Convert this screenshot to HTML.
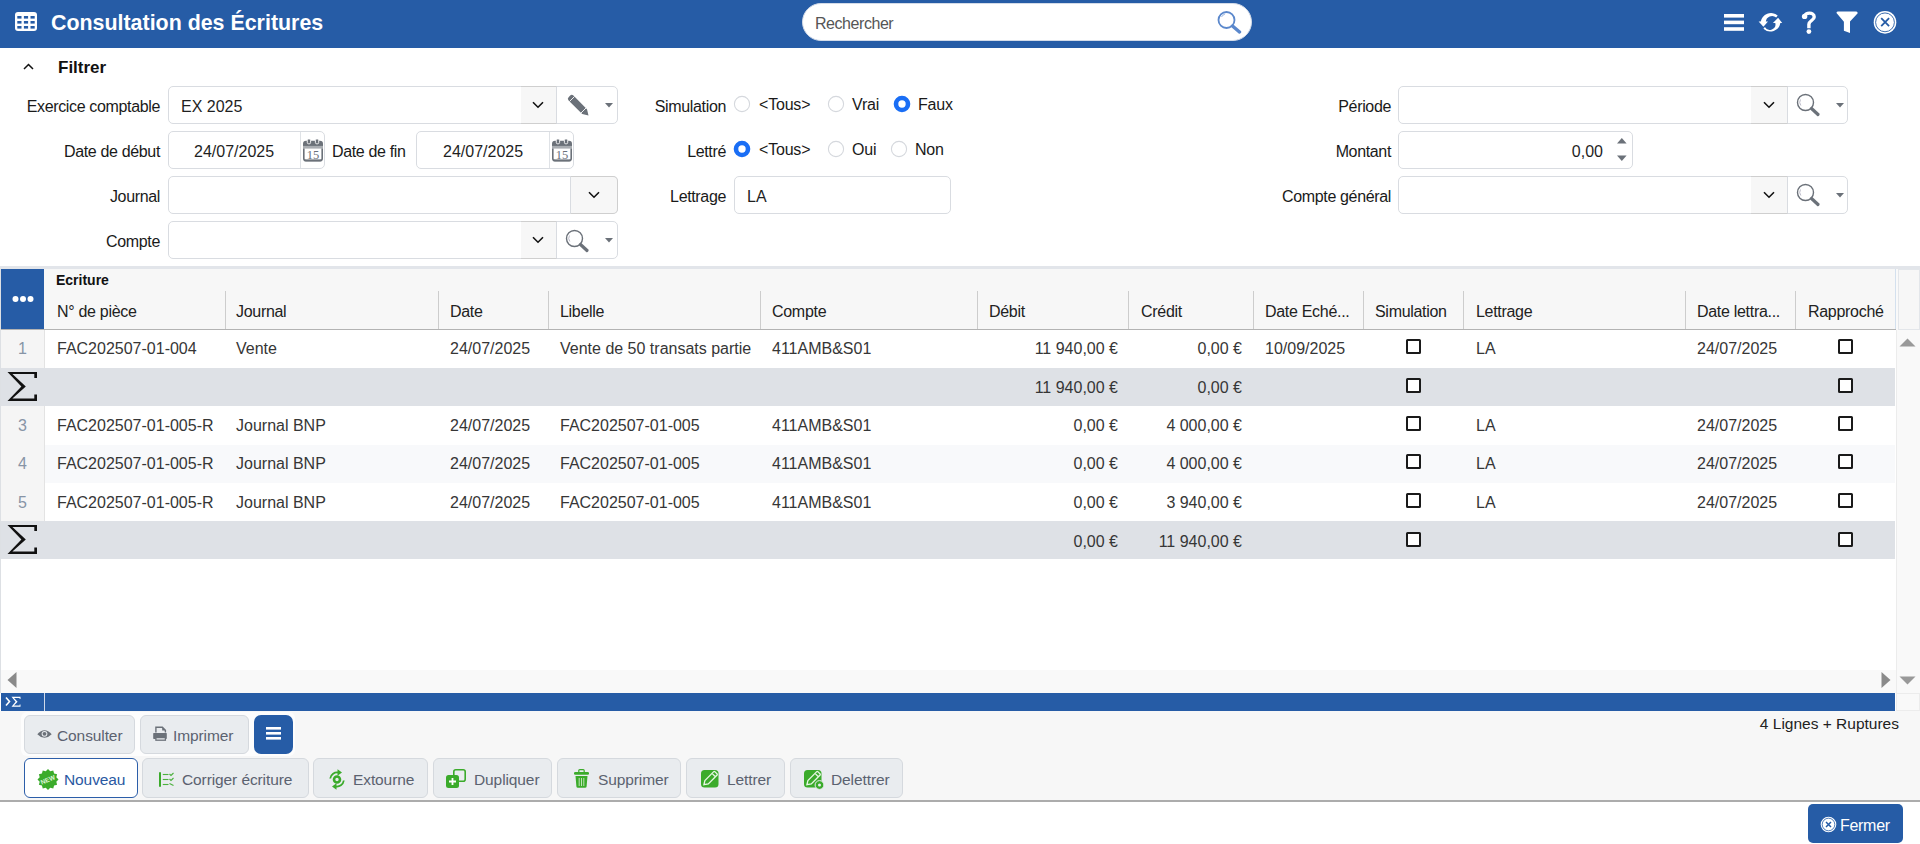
<!DOCTYPE html>
<html><head><meta charset="utf-8">
<style>
*{box-sizing:border-box;margin:0;padding:0}
html,body{width:1920px;height:844px;overflow:hidden;background:#fff;font-family:"Liberation Sans",sans-serif}
.r{position:absolute}
.t{position:absolute;line-height:20px;white-space:nowrap}
</style></head><body>
<div class="r" style="left:0px;top:0px;width:1920px;height:48px;background:#265ca6;"></div>
<svg class="r" style="left:15px;top:12px" width="22" height="19" viewBox="0 0 22 19"><rect x="0" y="0" width="22" height="19" rx="3" fill="#fff"/><g fill="#265ca6"><rect x="2.3" y="4" width="4.2" height="2.6"/><rect x="8.9" y="4" width="4.2" height="2.6"/><rect x="15.5" y="4" width="4.2" height="2.6"/><rect x="2.3" y="9" width="4.2" height="2.6"/><rect x="8.9" y="9" width="4.2" height="2.6"/><rect x="15.5" y="9" width="4.2" height="2.6"/><rect x="2.3" y="14" width="4.2" height="2.6"/><rect x="8.9" y="14" width="4.2" height="2.6"/><rect x="15.5" y="14" width="4.2" height="2.6"/></g></svg>
<div class="t" style="left:51px;top:10px;font-size:21.4px;color:#fff;font-weight:bold;line-height:26px;">Consultation des Écritures</div>
<div class="r" style="left:802px;top:3px;width:450px;height:38px;border-radius:19px;background:#fff;border:1px solid #d3dbe8"></div>
<div class="t" style="left:815px;top:14px;font-size:16px;color:#555;font-weight:normal;letter-spacing:-0.45px;">Rechercher</div>
<svg class="r" style="left:1216px;top:10px" width="27" height="24" viewBox="0 0 27 24"><circle cx="10.5" cy="10" r="8" fill="none" stroke="#5b88cc" stroke-width="1.8"/><path d="M5.5 7 A6 6 0 0 1 9 4" fill="none" stroke="#9db8e2" stroke-width="1"/><line x1="16.5" y1="16" x2="23.5" y2="22" stroke="#5b88cc" stroke-width="3.4" stroke-linecap="round"/></svg>
<svg class="r" style="left:1724px;top:14px" width="20" height="17" viewBox="0 0 20 17"><rect x="0" y="0" width="20" height="3.6" fill="#fff"/><rect x="0" y="6.6" width="20" height="3.6" fill="#fff"/><rect x="0" y="13.2" width="20" height="3.6" fill="#fff"/></svg>
<svg class="r" style="left:1757px;top:10px" width="26" height="24" viewBox="0 0 26 24"><path d="M20.7 5.4 A10.6 10.6 0 0 0 3.6 12 L8.8 12 A6.3 6.3 0 0 1 19.2 7.6 Z" fill="#fff"/><path d="M1.6 11.5 L11 11.5 L6.4 16.8Z" fill="#fff"/><path d="M6.4 18.8 A10.2 10.2 0 0 0 23.4 12.8 L18.2 12.8 A5.6 5.6 0 0 1 7.9 17 Z" fill="#fff"/><path d="M15.9 12.9 L25.2 12.9 L21.1 7.8Z" fill="#fff"/></svg>
<svg class="r" style="left:1801px;top:10px" width="16" height="25" viewBox="0 0 16 25"><path d="M3.6 6.4 C3.8 2.2, 13.2 1.8, 13.2 6.9 C13.2 10.2, 7.9 10.8, 7.9 14.2 V18.2" fill="none" stroke="#fff" stroke-width="3.4"/><circle cx="3.6" cy="6.4" r="2.7" fill="#fff"/><circle cx="7.9" cy="21.6" r="2.4" fill="#fff"/></svg>
<svg class="r" style="left:1836px;top:11px" width="22" height="23" viewBox="0 0 22 23"><path d="M0.5 2 Q0.3 0.5 1.8 0.5 H20.2 Q21.7 0.5 21.7 2.3 L14 10.4 V22 L7.9 19.7 V10.8 Z" fill="#fff"/></svg>
<svg class="r" style="left:1873px;top:10px" width="24" height="25" viewBox="0 0 24 25"><circle cx="12" cy="12.35" r="11.3" fill="#fff"/><circle cx="12" cy="12.35" r="9.4" fill="none" stroke="#265ca6" stroke-width="0.9"/><path d="M8.2 8.2 L16.1 16.1 M16.1 8.2 L8.2 16.1" stroke="#265ca6" stroke-width="1.8"/></svg>
<svg class="r" style="left:23px;top:63px" width="11" height="7" viewBox="0 0 11 7"><path d="M1 6 L5.5 1.5 L10 6" fill="none" stroke="#111" stroke-width="1.5"/></svg>
<div class="t" style="left:58px;top:58px;font-size:17px;color:#111;font-weight:bold;">Filtrer</div>
<div class="t" style="right:1760px;top:97px;font-size:16px;color:#1a1a1a;font-weight:normal;letter-spacing:-0.35px;">Exercice comptable</div>
<div class="t" style="right:1760px;top:142px;font-size:16px;color:#1a1a1a;font-weight:normal;letter-spacing:-0.35px;">Date de début</div>
<div class="t" style="right:1760px;top:187px;font-size:16px;color:#1a1a1a;font-weight:normal;letter-spacing:-0.35px;">Journal</div>
<div class="t" style="right:1760px;top:232px;font-size:16px;color:#1a1a1a;font-weight:normal;letter-spacing:-0.35px;">Compte</div>
<div class="r" style="left:168px;top:86px;width:450px;height:38px;border:1px solid #d9dce1;border-radius:5px;background:#fff"></div>
<div class="t" style="left:181px;top:97px;font-size:16px;color:#1f1f1f;font-weight:normal;">EX 2025</div>
<div class="r" style="left:521px;top:86px;width:36px;height:38px;background:#f7f7f7;border-top:1px solid #cfcfcf;border-bottom:1px solid #cfcfcf;border-right:1px solid #d9dce1;"></div>
<svg class="r" style="left:532px;top:101px" width="12" height="8" viewBox="0 0 12 8"><path d="M1 1.2 L6 6.2 L11 1.2" fill="none" stroke="#111" stroke-width="1.6"/></svg>
<svg class="r" style="left:567px;top:94px" width="22" height="22" viewBox="0 0 22 22"><path d="M3.2 1.6 Q4.8 0 6.4 1.6 L20 15.2 L21.5 21.5 L15.2 20 L1.6 6.4 Q0 4.8 1.6 3.2Z" fill="#6b7179"/><line x1="2.5" y1="7.5" x2="7.5" y2="2.5" stroke="#fff" stroke-width="0.9"/><line x1="14" y1="19" x2="19" y2="14" stroke="#fff" stroke-width="0.9"/></svg>
<svg class="r" style="left:605px;top:103px" width="8" height="5" viewBox="0 0 8 5"><path d="M0 0 H8 L4 4.5Z" fill="#6b7179"/></svg>
<div class="r" style="left:168px;top:131px;width:157px;height:38px;border:1px solid #d9dce1;border-radius:5px;background:#fff"></div>
<div class="t" style="left:194px;top:142px;font-size:16px;color:#1f1f1f;font-weight:normal;">24/07/2025</div>
<div class="r" style="left:300px;top:132px;width:1px;height:36px;background:#dfe2e6;"></div>
<svg class="r" style="left:303px;top:139px" width="20" height="23" viewBox="0 0 20 23"><path d="M0 5 Q0 1.8 3 1.8 H17 Q20 1.8 20 5 V6.9 H0Z" fill="#6b7179"/><rect x="4.3" y="0" width="3.3" height="4.8" rx="1.3" fill="#6b7179" stroke="#fff" stroke-width="0.9"/><rect x="12.4" y="0" width="3.3" height="4.8" rx="1.3" fill="#6b7179" stroke="#fff" stroke-width="0.9"/><rect x="0" y="6.9" width="20" height="2.7" fill="#a9adb2"/><path d="M0.8 9.4 V19.6 Q0.8 21.8 3 21.8 H17 Q19.2 21.8 19.2 19.6 V9.4" fill="none" stroke="#6b7179" stroke-width="1.6"/><rect x="1.5" y="20.4" width="17" height="1.9" fill="#6b7179"/><text x="10" y="20" font-size="12.5" font-family="Liberation Serif" fill="#6b7179" text-anchor="middle">15</text></svg>
<div class="t" style="left:332px;top:142px;font-size:16px;color:#1a1a1a;font-weight:normal;letter-spacing:-0.35px;">Date de fin</div>
<div class="r" style="left:416px;top:131px;width:158px;height:38px;border:1px solid #d9dce1;border-radius:5px;background:#fff"></div>
<div class="t" style="left:443px;top:142px;font-size:16px;color:#1f1f1f;font-weight:normal;">24/07/2025</div>
<div class="r" style="left:549px;top:132px;width:1px;height:36px;background:#dfe2e6;"></div>
<svg class="r" style="left:552px;top:139px" width="20" height="23" viewBox="0 0 20 23"><path d="M0 5 Q0 1.8 3 1.8 H17 Q20 1.8 20 5 V6.9 H0Z" fill="#6b7179"/><rect x="4.3" y="0" width="3.3" height="4.8" rx="1.3" fill="#6b7179" stroke="#fff" stroke-width="0.9"/><rect x="12.4" y="0" width="3.3" height="4.8" rx="1.3" fill="#6b7179" stroke="#fff" stroke-width="0.9"/><rect x="0" y="6.9" width="20" height="2.7" fill="#a9adb2"/><path d="M0.8 9.4 V19.6 Q0.8 21.8 3 21.8 H17 Q19.2 21.8 19.2 19.6 V9.4" fill="none" stroke="#6b7179" stroke-width="1.6"/><rect x="1.5" y="20.4" width="17" height="1.9" fill="#6b7179"/><text x="10" y="20" font-size="12.5" font-family="Liberation Serif" fill="#6b7179" text-anchor="middle">15</text></svg>
<div class="r" style="left:168px;top:176px;width:450px;height:38px;border:1px solid #d9dce1;border-radius:5px;background:#fff"></div>
<div class="r" style="left:570px;top:176px;width:48px;height:38px;background:#f7f7f7;border:1px solid #cfcfcf;border-left:1px solid #d9dce1;border-radius:0 5px 5px 0"></div>
<svg class="r" style="left:588px;top:191px" width="12" height="8" viewBox="0 0 12 8"><path d="M1 1.2 L6 6.2 L11 1.2" fill="none" stroke="#111" stroke-width="1.6"/></svg>
<div class="r" style="left:168px;top:221px;width:450px;height:38px;border:1px solid #d9dce1;border-radius:5px;background:#fff"></div>
<div class="r" style="left:521px;top:221px;width:36px;height:38px;background:#f7f7f7;border-top:1px solid #cfcfcf;border-bottom:1px solid #cfcfcf;border-right:1px solid #d9dce1;"></div>
<svg class="r" style="left:532px;top:236px" width="12" height="8" viewBox="0 0 12 8"><path d="M1 1.2 L6 6.2 L11 1.2" fill="none" stroke="#111" stroke-width="1.6"/></svg>
<svg class="r" style="left:565px;top:229px" width="25" height="24" viewBox="0 0 25 24"><circle cx="9.5" cy="9.5" r="8" fill="none" stroke="#6b7179" stroke-width="1.4"/><path d="M4.5 6.5 A5.5 5.5 0 0 0 4.8 12.5" fill="none" stroke="#aab" stroke-width="0.8"/><line x1="15.5" y1="15.5" x2="22" y2="21.5" stroke="#6b7179" stroke-width="3.2" stroke-linecap="round"/></svg>
<svg class="r" style="left:605px;top:238px" width="8" height="5" viewBox="0 0 8 5"><path d="M0 0 H8 L4 4.5Z" fill="#6b7179"/></svg>
<div class="t" style="right:1194px;top:97px;font-size:16px;color:#1a1a1a;font-weight:normal;letter-spacing:-0.35px;">Simulation</div>
<div class="t" style="right:1194px;top:142px;font-size:16px;color:#1a1a1a;font-weight:normal;letter-spacing:-0.35px;">Lettré</div>
<div class="t" style="right:1194px;top:187px;font-size:16px;color:#1a1a1a;font-weight:normal;letter-spacing:-0.35px;">Lettrage</div>
<svg class="r" style="left:733px;top:95px" width="18" height="18" viewBox="0 0 18 18"><circle cx="9" cy="9" r="7.6" fill="#fff" stroke="#d5d8dd" stroke-width="1.1"/></svg>
<div class="t" style="left:759px;top:95px;font-size:16px;color:#1a1a1a;font-weight:normal;letter-spacing:-0.2px;">&lt;Tous&gt;</div>
<svg class="r" style="left:827px;top:95px" width="18" height="18" viewBox="0 0 18 18"><circle cx="9" cy="9" r="7.6" fill="#fff" stroke="#d5d8dd" stroke-width="1.1"/></svg>
<div class="t" style="left:852px;top:95px;font-size:16px;color:#1a1a1a;font-weight:normal;letter-spacing:-0.2px;">Vrai</div>
<svg class="r" style="left:893px;top:95px" width="18" height="18" viewBox="0 0 18 18"><circle cx="9" cy="9" r="6" fill="#fff" stroke="#1a6ef5" stroke-width="4.6"/></svg>
<div class="t" style="left:918px;top:95px;font-size:16px;color:#1a1a1a;font-weight:normal;letter-spacing:-0.2px;">Faux</div>
<svg class="r" style="left:733px;top:140px" width="18" height="18" viewBox="0 0 18 18"><circle cx="9" cy="9" r="6" fill="#fff" stroke="#1a6ef5" stroke-width="4.6"/></svg>
<div class="t" style="left:759px;top:140px;font-size:16px;color:#1a1a1a;font-weight:normal;letter-spacing:-0.2px;">&lt;Tous&gt;</div>
<svg class="r" style="left:827px;top:140px" width="18" height="18" viewBox="0 0 18 18"><circle cx="9" cy="9" r="7.6" fill="#fff" stroke="#d5d8dd" stroke-width="1.1"/></svg>
<div class="t" style="left:852px;top:140px;font-size:16px;color:#1a1a1a;font-weight:normal;letter-spacing:-0.2px;">Oui</div>
<svg class="r" style="left:890px;top:140px" width="18" height="18" viewBox="0 0 18 18"><circle cx="9" cy="9" r="7.6" fill="#fff" stroke="#d5d8dd" stroke-width="1.1"/></svg>
<div class="t" style="left:915px;top:140px;font-size:16px;color:#1a1a1a;font-weight:normal;letter-spacing:-0.2px;">Non</div>
<div class="r" style="left:734px;top:176px;width:217px;height:38px;border:1px solid #d9dce1;border-radius:5px;background:#fff"></div>
<div class="t" style="left:747px;top:187px;font-size:16px;color:#1f1f1f;font-weight:normal;">LA</div>
<div class="t" style="right:529px;top:97px;font-size:16px;color:#1a1a1a;font-weight:normal;letter-spacing:-0.35px;">Période</div>
<div class="t" style="right:529px;top:142px;font-size:16px;color:#1a1a1a;font-weight:normal;letter-spacing:-0.35px;">Montant</div>
<div class="t" style="right:529px;top:187px;font-size:16px;color:#1a1a1a;font-weight:normal;letter-spacing:-0.35px;">Compte général</div>
<div class="r" style="left:1398px;top:86px;width:450px;height:38px;border:1px solid #d9dce1;border-radius:5px;background:#fff"></div>
<div class="r" style="left:1751px;top:86px;width:37px;height:38px;background:#f7f7f7;border-top:1px solid #cfcfcf;border-bottom:1px solid #cfcfcf;border-right:1px solid #d9dce1;"></div>
<svg class="r" style="left:1763px;top:101px" width="12" height="8" viewBox="0 0 12 8"><path d="M1 1.2 L6 6.2 L11 1.2" fill="none" stroke="#111" stroke-width="1.6"/></svg>
<svg class="r" style="left:1796px;top:93px" width="25" height="24" viewBox="0 0 25 24"><circle cx="9.5" cy="9.5" r="8" fill="none" stroke="#6b7179" stroke-width="1.4"/><path d="M4.5 6.5 A5.5 5.5 0 0 0 4.8 12.5" fill="none" stroke="#aab" stroke-width="0.8"/><line x1="15.5" y1="15.5" x2="22" y2="21.5" stroke="#6b7179" stroke-width="3.2" stroke-linecap="round"/></svg>
<svg class="r" style="left:1836px;top:103px" width="8" height="5" viewBox="0 0 8 5"><path d="M0 0 H8 L4 4.5Z" fill="#6b7179"/></svg>
<div class="r" style="left:1398px;top:131px;width:235px;height:38px;border:1px solid #d9dce1;border-radius:5px;background:#fff"></div>
<div class="t" style="right:317px;top:142px;font-size:16px;color:#1f1f1f;font-weight:normal;">0,00</div>
<svg class="r" style="left:1617px;top:138px" width="10" height="23" viewBox="0 0 10 23"><path d="M0 5.5 L4.8 0 L9.6 5.5Z" fill="#6b7179"/><path d="M0 17.5 H9.6 L4.8 23Z" fill="#6b7179"/></svg>
<div class="r" style="left:1398px;top:176px;width:450px;height:38px;border:1px solid #d9dce1;border-radius:5px;background:#fff"></div>
<div class="r" style="left:1751px;top:176px;width:37px;height:38px;background:#f7f7f7;border-top:1px solid #cfcfcf;border-bottom:1px solid #cfcfcf;border-right:1px solid #d9dce1;"></div>
<svg class="r" style="left:1763px;top:191px" width="12" height="8" viewBox="0 0 12 8"><path d="M1 1.2 L6 6.2 L11 1.2" fill="none" stroke="#111" stroke-width="1.6"/></svg>
<svg class="r" style="left:1796px;top:183px" width="25" height="24" viewBox="0 0 25 24"><circle cx="9.5" cy="9.5" r="8" fill="none" stroke="#6b7179" stroke-width="1.4"/><path d="M4.5 6.5 A5.5 5.5 0 0 0 4.8 12.5" fill="none" stroke="#aab" stroke-width="0.8"/><line x1="15.5" y1="15.5" x2="22" y2="21.5" stroke="#6b7179" stroke-width="3.2" stroke-linecap="round"/></svg>
<svg class="r" style="left:1836px;top:193px" width="8" height="5" viewBox="0 0 8 5"><path d="M0 0 H8 L4 4.5Z" fill="#6b7179"/></svg>
<div class="r" style="left:0px;top:266px;width:1920px;height:3px;background:#e2e5ea;"></div>
<div class="r" style="left:0px;top:269px;width:1896px;height:60px;background:#f7f7f7;"></div>
<div class="r" style="left:0px;top:329px;width:1896px;height:1px;background:#b3b3b3;"></div>
<div class="r" style="left:0px;top:269px;width:1px;height:424px;background:#dde0e4;"></div>
<div class="r" style="left:1px;top:269px;width:43px;height:60px;background:#265ca6;"></div>
<svg class="r" style="left:12px;top:295px" width="22" height="8" viewBox="0 0 22 8"><circle cx="3.5" cy="4" r="3" fill="#fff"/><circle cx="11" cy="4" r="3" fill="#fff"/><circle cx="18.5" cy="4" r="3" fill="#fff"/></svg>
<div class="t" style="left:56px;top:270px;font-size:14px;color:#111;font-weight:bold;">Ecriture</div>
<div class="r" style="left:225px;top:291px;width:1px;height:38px;background:#cdcdcd;"></div>
<div class="r" style="left:438px;top:291px;width:1px;height:38px;background:#cdcdcd;"></div>
<div class="r" style="left:548px;top:291px;width:1px;height:38px;background:#cdcdcd;"></div>
<div class="r" style="left:760px;top:291px;width:1px;height:38px;background:#cdcdcd;"></div>
<div class="r" style="left:977px;top:291px;width:1px;height:38px;background:#cdcdcd;"></div>
<div class="r" style="left:1128px;top:291px;width:1px;height:38px;background:#cdcdcd;"></div>
<div class="r" style="left:1253px;top:291px;width:1px;height:38px;background:#cdcdcd;"></div>
<div class="r" style="left:1363px;top:291px;width:1px;height:38px;background:#cdcdcd;"></div>
<div class="r" style="left:1463px;top:291px;width:1px;height:38px;background:#cdcdcd;"></div>
<div class="r" style="left:1685px;top:291px;width:1px;height:38px;background:#cdcdcd;"></div>
<div class="r" style="left:1795px;top:291px;width:1px;height:38px;background:#cdcdcd;"></div>
<div class="r" style="left:1895px;top:269px;width:2px;height:60px;background:#d3e0ee;"></div>
<div class="t" style="left:57px;top:302px;font-size:16px;color:#222;font-weight:normal;letter-spacing:-0.3px;">N° de pièce</div>
<div class="t" style="left:236px;top:302px;font-size:16px;color:#222;font-weight:normal;letter-spacing:-0.3px;">Journal</div>
<div class="t" style="left:450px;top:302px;font-size:16px;color:#222;font-weight:normal;letter-spacing:-0.3px;">Date</div>
<div class="t" style="left:560px;top:302px;font-size:16px;color:#222;font-weight:normal;letter-spacing:-0.3px;">Libelle</div>
<div class="t" style="left:772px;top:302px;font-size:16px;color:#222;font-weight:normal;letter-spacing:-0.3px;">Compte</div>
<div class="t" style="left:989px;top:302px;font-size:16px;color:#222;font-weight:normal;letter-spacing:-0.3px;">Débit</div>
<div class="t" style="left:1141px;top:302px;font-size:16px;color:#222;font-weight:normal;letter-spacing:-0.3px;">Crédit</div>
<div class="t" style="left:1265px;top:302px;font-size:16px;color:#222;font-weight:normal;letter-spacing:-0.3px;">Date Eché...</div>
<div class="t" style="left:1375px;top:302px;font-size:16px;color:#222;font-weight:normal;letter-spacing:-0.3px;">Simulation</div>
<div class="t" style="left:1476px;top:302px;font-size:16px;color:#222;font-weight:normal;letter-spacing:-0.3px;">Lettrage</div>
<div class="t" style="left:1697px;top:302px;font-size:16px;color:#222;font-weight:normal;letter-spacing:-0.3px;">Date lettra...</div>
<div class="t" style="left:1808px;top:302px;font-size:16px;color:#222;font-weight:normal;letter-spacing:-0.3px;">Rapproché</div>
<div class="r" style="left:45px;top:330px;width:1850px;height:38px;background:#ffffff;"></div>
<div class="r" style="left:1px;top:330px;width:43px;height:38px;background:#f5f5f5;"></div>
<div class="r" style="left:44px;top:330px;width:1px;height:38px;background:#e3e3e3;"></div>
<div class="t" style="left:1px;width:43px;text-align:center;top:339px;font-size:16px;color:#8794a6">1</div>
<div class="t" style="left:57px;top:339px;font-size:16px;color:#363636;font-weight:normal;">FAC202507-01-004</div>
<div class="t" style="left:236px;top:339px;font-size:16px;color:#363636;font-weight:normal;">Vente</div>
<div class="t" style="left:450px;top:339px;font-size:16px;color:#363636;font-weight:normal;">24/07/2025</div>
<div class="t" style="left:560px;top:339px;font-size:16px;color:#363636;font-weight:normal;">Vente de 50 transats partie</div>
<div class="t" style="left:772px;top:339px;font-size:16px;color:#363636;font-weight:normal;">411AMB&amp;S01</div>
<div class="t" style="right:802px;top:339px;font-size:16px;color:#363636;font-weight:normal;">11 940,00 €</div>
<div class="t" style="right:678px;top:339px;font-size:16px;color:#363636;font-weight:normal;">0,00 €</div>
<div class="t" style="left:1265px;top:339px;font-size:16px;color:#363636;font-weight:normal;">10/09/2025</div>
<div class="t" style="left:1476px;top:339px;font-size:16px;color:#363636;font-weight:normal;">LA</div>
<div class="t" style="left:1697px;top:339px;font-size:16px;color:#363636;font-weight:normal;">24/07/2025</div>
<div class="r" style="left:1406px;top:339px;width:15px;height:15px;border:2px solid #1a1a1a;border-radius:1.5px;background:#fff"></div>
<div class="r" style="left:1838px;top:339px;width:15px;height:15px;border:2px solid #1a1a1a;border-radius:1.5px;background:#fff"></div>
<div class="r" style="left:45px;top:368px;width:1850px;height:38px;background:#dee1e6;"></div>
<div class="r" style="left:1px;top:368px;width:44px;height:38px;background:#dee1e6;"></div>
<svg class="r" style="left:7px;top:372px" width="31" height="30" viewBox="0 0 31 30"><path d="M0.5 0 H30 V6 H27.3 V2.1 H5.4 L18.8 14.4 L5.4 26.5 H27.3 V22.4 H30 V29 H0.5 L14.4 14.4Z" fill="#111"/></svg>
<div class="t" style="right:802px;top:378px;font-size:16px;color:#363636;font-weight:normal;">11 940,00 €</div>
<div class="t" style="right:678px;top:378px;font-size:16px;color:#363636;font-weight:normal;">0,00 €</div>
<div class="r" style="left:1406px;top:378px;width:15px;height:15px;border:2px solid #1a1a1a;border-radius:1.5px;background:#fff"></div>
<div class="r" style="left:1838px;top:378px;width:15px;height:15px;border:2px solid #1a1a1a;border-radius:1.5px;background:#fff"></div>
<div class="r" style="left:45px;top:406px;width:1850px;height:39px;background:#ffffff;"></div>
<div class="r" style="left:1px;top:406px;width:43px;height:39px;background:#f5f5f5;"></div>
<div class="r" style="left:44px;top:406px;width:1px;height:39px;background:#e3e3e3;"></div>
<div class="t" style="left:1px;width:43px;text-align:center;top:416px;font-size:16px;color:#8794a6">3</div>
<div class="t" style="left:57px;top:416px;font-size:16px;color:#363636;font-weight:normal;">FAC202507-01-005-R</div>
<div class="t" style="left:236px;top:416px;font-size:16px;color:#363636;font-weight:normal;">Journal BNP</div>
<div class="t" style="left:450px;top:416px;font-size:16px;color:#363636;font-weight:normal;">24/07/2025</div>
<div class="t" style="left:560px;top:416px;font-size:16px;color:#363636;font-weight:normal;">FAC202507-01-005</div>
<div class="t" style="left:772px;top:416px;font-size:16px;color:#363636;font-weight:normal;">411AMB&amp;S01</div>
<div class="t" style="right:802px;top:416px;font-size:16px;color:#363636;font-weight:normal;">0,00 €</div>
<div class="t" style="right:678px;top:416px;font-size:16px;color:#363636;font-weight:normal;">4 000,00 €</div>
<div class="t" style="left:1476px;top:416px;font-size:16px;color:#363636;font-weight:normal;">LA</div>
<div class="t" style="left:1697px;top:416px;font-size:16px;color:#363636;font-weight:normal;">24/07/2025</div>
<div class="r" style="left:1406px;top:416px;width:15px;height:15px;border:2px solid #1a1a1a;border-radius:1.5px;background:#fff"></div>
<div class="r" style="left:1838px;top:416px;width:15px;height:15px;border:2px solid #1a1a1a;border-radius:1.5px;background:#fff"></div>
<div class="r" style="left:45px;top:445px;width:1850px;height:38px;background:#f8f9fb;"></div>
<div class="r" style="left:1px;top:445px;width:43px;height:38px;background:#f5f5f5;"></div>
<div class="r" style="left:44px;top:445px;width:1px;height:38px;background:#e3e3e3;"></div>
<div class="t" style="left:1px;width:43px;text-align:center;top:454px;font-size:16px;color:#8794a6">4</div>
<div class="t" style="left:57px;top:454px;font-size:16px;color:#363636;font-weight:normal;">FAC202507-01-005-R</div>
<div class="t" style="left:236px;top:454px;font-size:16px;color:#363636;font-weight:normal;">Journal BNP</div>
<div class="t" style="left:450px;top:454px;font-size:16px;color:#363636;font-weight:normal;">24/07/2025</div>
<div class="t" style="left:560px;top:454px;font-size:16px;color:#363636;font-weight:normal;">FAC202507-01-005</div>
<div class="t" style="left:772px;top:454px;font-size:16px;color:#363636;font-weight:normal;">411AMB&amp;S01</div>
<div class="t" style="right:802px;top:454px;font-size:16px;color:#363636;font-weight:normal;">0,00 €</div>
<div class="t" style="right:678px;top:454px;font-size:16px;color:#363636;font-weight:normal;">4 000,00 €</div>
<div class="t" style="left:1476px;top:454px;font-size:16px;color:#363636;font-weight:normal;">LA</div>
<div class="t" style="left:1697px;top:454px;font-size:16px;color:#363636;font-weight:normal;">24/07/2025</div>
<div class="r" style="left:1406px;top:454px;width:15px;height:15px;border:2px solid #1a1a1a;border-radius:1.5px;background:#fff"></div>
<div class="r" style="left:1838px;top:454px;width:15px;height:15px;border:2px solid #1a1a1a;border-radius:1.5px;background:#fff"></div>
<div class="r" style="left:45px;top:483px;width:1850px;height:38px;background:#ffffff;"></div>
<div class="r" style="left:1px;top:483px;width:43px;height:38px;background:#f5f5f5;"></div>
<div class="r" style="left:44px;top:483px;width:1px;height:38px;background:#e3e3e3;"></div>
<div class="t" style="left:1px;width:43px;text-align:center;top:493px;font-size:16px;color:#8794a6">5</div>
<div class="t" style="left:57px;top:493px;font-size:16px;color:#363636;font-weight:normal;">FAC202507-01-005-R</div>
<div class="t" style="left:236px;top:493px;font-size:16px;color:#363636;font-weight:normal;">Journal BNP</div>
<div class="t" style="left:450px;top:493px;font-size:16px;color:#363636;font-weight:normal;">24/07/2025</div>
<div class="t" style="left:560px;top:493px;font-size:16px;color:#363636;font-weight:normal;">FAC202507-01-005</div>
<div class="t" style="left:772px;top:493px;font-size:16px;color:#363636;font-weight:normal;">411AMB&amp;S01</div>
<div class="t" style="right:802px;top:493px;font-size:16px;color:#363636;font-weight:normal;">0,00 €</div>
<div class="t" style="right:678px;top:493px;font-size:16px;color:#363636;font-weight:normal;">3 940,00 €</div>
<div class="t" style="left:1476px;top:493px;font-size:16px;color:#363636;font-weight:normal;">LA</div>
<div class="t" style="left:1697px;top:493px;font-size:16px;color:#363636;font-weight:normal;">24/07/2025</div>
<div class="r" style="left:1406px;top:493px;width:15px;height:15px;border:2px solid #1a1a1a;border-radius:1.5px;background:#fff"></div>
<div class="r" style="left:1838px;top:493px;width:15px;height:15px;border:2px solid #1a1a1a;border-radius:1.5px;background:#fff"></div>
<div class="r" style="left:45px;top:521px;width:1850px;height:38px;background:#dee1e6;"></div>
<div class="r" style="left:1px;top:521px;width:44px;height:38px;background:#dee1e6;"></div>
<svg class="r" style="left:7px;top:525px" width="31" height="30" viewBox="0 0 31 30"><path d="M0.5 0 H30 V6 H27.3 V2.1 H5.4 L18.8 14.4 L5.4 26.5 H27.3 V22.4 H30 V29 H0.5 L14.4 14.4Z" fill="#111"/></svg>
<div class="t" style="right:802px;top:532px;font-size:16px;color:#363636;font-weight:normal;">0,00 €</div>
<div class="t" style="right:678px;top:532px;font-size:16px;color:#363636;font-weight:normal;">11 940,00 €</div>
<div class="r" style="left:1406px;top:532px;width:15px;height:15px;border:2px solid #1a1a1a;border-radius:1.5px;background:#fff"></div>
<div class="r" style="left:1838px;top:532px;width:15px;height:15px;border:2px solid #1a1a1a;border-radius:1.5px;background:#fff"></div>
<div class="r" style="left:1px;top:670px;width:1895px;height:23px;background:#f9f9f9;"></div>
<div class="r" style="left:1896px;top:269px;width:24px;height:424px;background:#f9f9f9;"></div>
<div class="r" style="left:1896px;top:330px;width:1px;height:363px;background:#ececec;"></div>
<div class="r" style="left:1898px;top:269px;width:22px;height:61px;background:#f7f7f7;border:1px solid #e3e6ea;"></div>
<svg class="r" style="left:7px;top:672px" width="10" height="16" viewBox="0 0 10 16"><path d="M9.5 0 V16 L0.5 8Z" fill="#8a8a8a"/></svg>
<svg class="r" style="left:1881px;top:672px" width="10" height="16" viewBox="0 0 10 16"><path d="M0.5 0 V16 L9.5 8Z" fill="#8a8a8a"/></svg>
<svg class="r" style="left:1899px;top:338px" width="17" height="9" viewBox="0 0 17 9"><path d="M0.5 8.5 H16.5 L8.5 0.5Z" fill="#999"/></svg>
<svg class="r" style="left:1899px;top:676px" width="17" height="9" viewBox="0 0 17 9"><path d="M0.5 0.5 H16.5 L8.5 8.5Z" fill="#999"/></svg>
<div class="r" style="left:1px;top:693px;width:1894px;height:18px;background:#265ca6;"></div>
<div class="r" style="left:44px;top:693px;width:1px;height:18px;background:#cfd9ea;"></div>
<svg class="r" style="left:5px;top:696px" width="17" height="12" viewBox="0 0 17 12"><path d="M1 1.5 L4.5 5.5 L1 9.5" fill="none" stroke="#fff" stroke-width="1.6"/><path d="M6.5 0.8 H15.5 V3 H14.6 V2 H9 L12.6 5.8 L9 9.6 H14.6 V8.6 H15.5 V10.8 H6.5 L10.6 5.8Z" fill="#fff"/></svg>
<div class="r" style="left:0px;top:711px;width:1920px;height:89px;background:#f7f7f7;"></div>
<div class="r" style="left:1896px;top:693px;width:24px;height:18px;background:#f9f9f9;border:1px solid #ececec;"></div>
<div class="r" style="left:0px;top:800px;width:1920px;height:2px;background:#acacac;"></div>
<div class="r" style="left:21px;top:712px;width:274px;height:44px;background:#fdfdfd;border-radius:6px;"></div>
<div class="r" style="left:24px;top:715px;width:111px;height:39px;background:#e9ecef;border:1px solid #d5d9de;border-radius:6px"></div>
<svg class="r" style="left:37px;top:729px" width="15" height="10" viewBox="0 0 15 10"><path d="M0.3 5.2 Q7.5 -2.5 14.7 5.2 Q7.5 12.5 0.3 5.2Z" fill="#6b7179"/><circle cx="7.5" cy="4.8" r="2.9" fill="#e9ecef"/><circle cx="7.5" cy="4.8" r="1.9" fill="#6b7179"/></svg>
<div class="t" style="left:57px;top:726px;font-size:15.5px;color:#5b6270;font-weight:normal;letter-spacing:-0.1px;">Consulter</div>
<div class="r" style="left:140px;top:715px;width:109px;height:39px;background:#e9ecef;border:1px solid #d5d9de;border-radius:6px"></div>
<svg class="r" style="left:152px;top:726px" width="16" height="16" viewBox="0 0 16 16"><path d="M3.9 6.5 V1.3 H10.4 L13.4 4.3 V6.5" fill="none" stroke="#6b7179" stroke-width="1.4"/><path d="M10.2 1.3 V4.6 H13.4" fill="#6b7179"/><rect x="1.2" y="7" width="13.6" height="5.9" rx="0.6" fill="#6b7179"/><rect x="3.9" y="11.6" width="9.5" height="2.6" fill="#e9ecef" stroke="#6b7179" stroke-width="1.3"/></svg>
<div class="t" style="left:173px;top:726px;font-size:15.5px;color:#5b6270;font-weight:normal;letter-spacing:-0.1px;">Imprimer</div>
<div class="r" style="left:254px;top:715px;width:39px;height:39px;background:#265ca6;border-radius:7px;"></div>
<svg class="r" style="left:266px;top:727px" width="15" height="13" viewBox="0 0 15 13"><rect x="0" y="0" width="15" height="2.6" fill="#fff"/><rect x="0" y="5" width="15" height="2.6" fill="#fff"/><rect x="0" y="10" width="15" height="2.6" fill="#fff"/></svg>
<div class="r" style="left:24px;top:758px;width:114px;height:40px;background:#fff;border:1.5px solid #2c5ea9;border-radius:6px"></div>
<svg class="r" style="left:37px;top:769px" width="22" height="21" viewBox="0 0 22 21"><path d="M11.00 0.00 L13.23 2.19 L16.25 1.41 L17.08 4.42 L20.09 5.25 L19.31 8.27 L21.50 10.50 L19.31 12.73 L20.09 15.75 L17.08 16.58 L16.25 19.59 L13.23 18.81 L11.00 21.00 L8.77 18.81 L5.75 19.59 L4.92 16.58 L1.91 15.75 L2.69 12.73 L0.50 10.50 L2.69 8.27 L1.91 5.25 L4.92 4.42 L5.75 1.41 L8.77 2.19Z" fill="#3bab2b"/><text x="11" y="13" font-size="6.5" font-family="Liberation Sans" font-weight="bold" fill="#dff5d8" text-anchor="middle" transform="rotate(-22 11 11)">NEW</text></svg>
<div class="t" style="left:64px;top:770px;font-size:15.5px;color:#2a59a2;font-weight:normal;letter-spacing:-0.1px;">Nouveau</div>
<div class="r" style="left:142px;top:758px;width:167px;height:40px;background:#e9ecef;border:1px solid #d5d9de;border-radius:6px"></div>
<svg class="r" style="left:159px;top:772px" width="15" height="15" viewBox="0 0 15 15"><rect x="0" y="0" width="2" height="15" rx="1" fill="#3bab2b"/><g stroke="#3bab2b" stroke-width="1.1" fill="none" opacity="0.9"><line x1="3.8" y1="2.5" x2="9.5" y2="2.5"/><line x1="3.8" y1="7.5" x2="9.5" y2="7.5"/><line x1="3.8" y1="12.5" x2="9.5" y2="12.5"/><path d="M10.5 2 L12 3.5 L14.5 1"/><path d="M10.5 7 L12 8.5 L14.5 6"/><path d="M10.5 11.5 L14.5 13.5"/></g></svg>
<div class="t" style="left:182px;top:770px;font-size:15.5px;color:#5b6270;font-weight:normal;letter-spacing:-0.1px;">Corriger écriture</div>
<div class="r" style="left:313px;top:758px;width:115px;height:40px;background:#e9ecef;border:1px solid #d5d9de;border-radius:6px"></div>
<svg class="r" style="left:328px;top:769px" width="18" height="21" viewBox="0 0 18 21"><circle cx="9" cy="10.5" r="3" fill="none" stroke="#3bab2b" stroke-width="2.6"/><path d="M2.2 9.5 A7 7 0 0 1 10.5 3.6" fill="none" stroke="#3bab2b" stroke-width="1.8"/><path d="M9.5 0.3 L14 3.6 L9.5 6.8Z" fill="#3bab2b"/><path d="M15.8 11.5 A7 7 0 0 1 7.5 17.4" fill="none" stroke="#3bab2b" stroke-width="1.8"/><path d="M8.5 14.2 L4 17.4 L8.5 20.7Z" fill="#3bab2b"/></svg>
<div class="t" style="left:353px;top:770px;font-size:15.5px;color:#5b6270;font-weight:normal;letter-spacing:-0.1px;">Extourne</div>
<div class="r" style="left:433px;top:758px;width:119px;height:40px;background:#e9ecef;border:1px solid #d5d9de;border-radius:6px"></div>
<svg class="r" style="left:446px;top:769px" width="20" height="19" viewBox="0 0 20 19"><rect x="7.8" y="0.8" width="11.4" height="11.4" rx="2" fill="none" stroke="#3bab2b" stroke-width="1.6"/><rect x="0" y="6" width="13" height="13" rx="2.5" fill="#3bab2b"/><path d="M6.5 9 V16 M3 12.5 H10" stroke="#fff" stroke-width="1.8"/></svg>
<div class="t" style="left:474px;top:770px;font-size:15.5px;color:#5b6270;font-weight:normal;letter-spacing:-0.1px;">Dupliquer</div>
<div class="r" style="left:557px;top:758px;width:124px;height:40px;background:#e9ecef;border:1px solid #d5d9de;border-radius:6px"></div>
<svg class="r" style="left:574px;top:769px" width="15" height="19" viewBox="0 0 15 19"><rect x="0" y="3" width="15" height="2.8" rx="1.2" fill="#3bab2b"/><path d="M4.8 3.5 V1.6 Q4.8 0.6 5.8 0.6 H9.2 Q10.2 0.6 10.2 1.6 V3.5" fill="none" stroke="#3bab2b" stroke-width="1.2"/><path d="M1.5 7 H13.5 L12.6 17.4 Q12.5 18.8 11 18.8 H4 Q2.5 18.8 2.4 17.4Z" fill="#3bab2b"/><g stroke="#cfe9c9" stroke-width="0.9"><line x1="5.2" y1="9" x2="5.2" y2="17"/><line x1="7.5" y1="9" x2="7.5" y2="17"/><line x1="9.8" y1="9" x2="9.8" y2="17"/></g></svg>
<div class="t" style="left:598px;top:770px;font-size:15.5px;color:#5b6270;font-weight:normal;letter-spacing:-0.1px;">Supprimer</div>
<div class="r" style="left:686px;top:758px;width:99px;height:40px;background:#e9ecef;border:1px solid #d5d9de;border-radius:6px"></div>
<svg class="r" style="left:701px;top:770px" width="18" height="18" viewBox="0 0 18 18"><rect x="0" y="0" width="17.5" height="17.5" rx="3.5" fill="#3bab2b"/><path d="M2.9 14.6 L3.9 10.5 L12.5 1.9 Q13.3 1.1 14.1 1.9 L15.9 3.7 Q16.7 4.5 15.9 5.3 L7.3 13.9 Z M11 3.4 L14.4 6.8" fill="none" stroke="#e8f6e4" stroke-width="1.3"/></svg>
<div class="t" style="left:727px;top:770px;font-size:15.5px;color:#5b6270;font-weight:normal;letter-spacing:-0.1px;">Lettrer</div>
<div class="r" style="left:790px;top:758px;width:113px;height:40px;background:#e9ecef;border:1px solid #d5d9de;border-radius:6px"></div>
<svg class="r" style="left:804px;top:770px" width="21" height="20" viewBox="0 0 21 20"><rect x="0" y="0" width="17.5" height="17.5" rx="3.5" fill="#3bab2b"/><path d="M2.9 14.6 L3.9 10.5 L12.5 1.9 Q13.3 1.1 14.1 1.9 L15.9 3.7 Q16.7 4.5 15.9 5.3 L7.3 13.9 Z M11 3.4 L14.4 6.8" fill="none" stroke="#e8f6e4" stroke-width="1.3"/><circle cx="15.5" cy="15" r="4.4" fill="#3bab2b" stroke="#e9ecef" stroke-width="1"/><circle cx="15.5" cy="15" r="1.5" fill="#e9ecef"/></svg>
<div class="t" style="left:831px;top:770px;font-size:15.5px;color:#5b6270;font-weight:normal;letter-spacing:-0.1px;">Delettrer</div>
<div class="t" style="right:21px;top:714px;font-size:15.5px;color:#222;font-weight:normal;">4 Lignes + Ruptures</div>
<div class="r" style="left:1808px;top:804px;width:95px;height:39px;background:#265ca6;border-radius:5px;"></div>
<svg class="r" style="left:1820px;top:816px" width="17" height="17" viewBox="0 0 17 17"><circle cx="8.5" cy="8.5" r="7.8" fill="#fff"/><circle cx="8.5" cy="8.5" r="6.3" fill="none" stroke="#265ca6" stroke-width="0.8"/><path d="M6 6 L11 11 M11 6 L6 11" stroke="#265ca6" stroke-width="1.5"/></svg>
<div class="t" style="left:1840px;top:816px;font-size:16px;color:#fff;font-weight:normal;letter-spacing:-0.3px;">Fermer</div>
</body></html>
